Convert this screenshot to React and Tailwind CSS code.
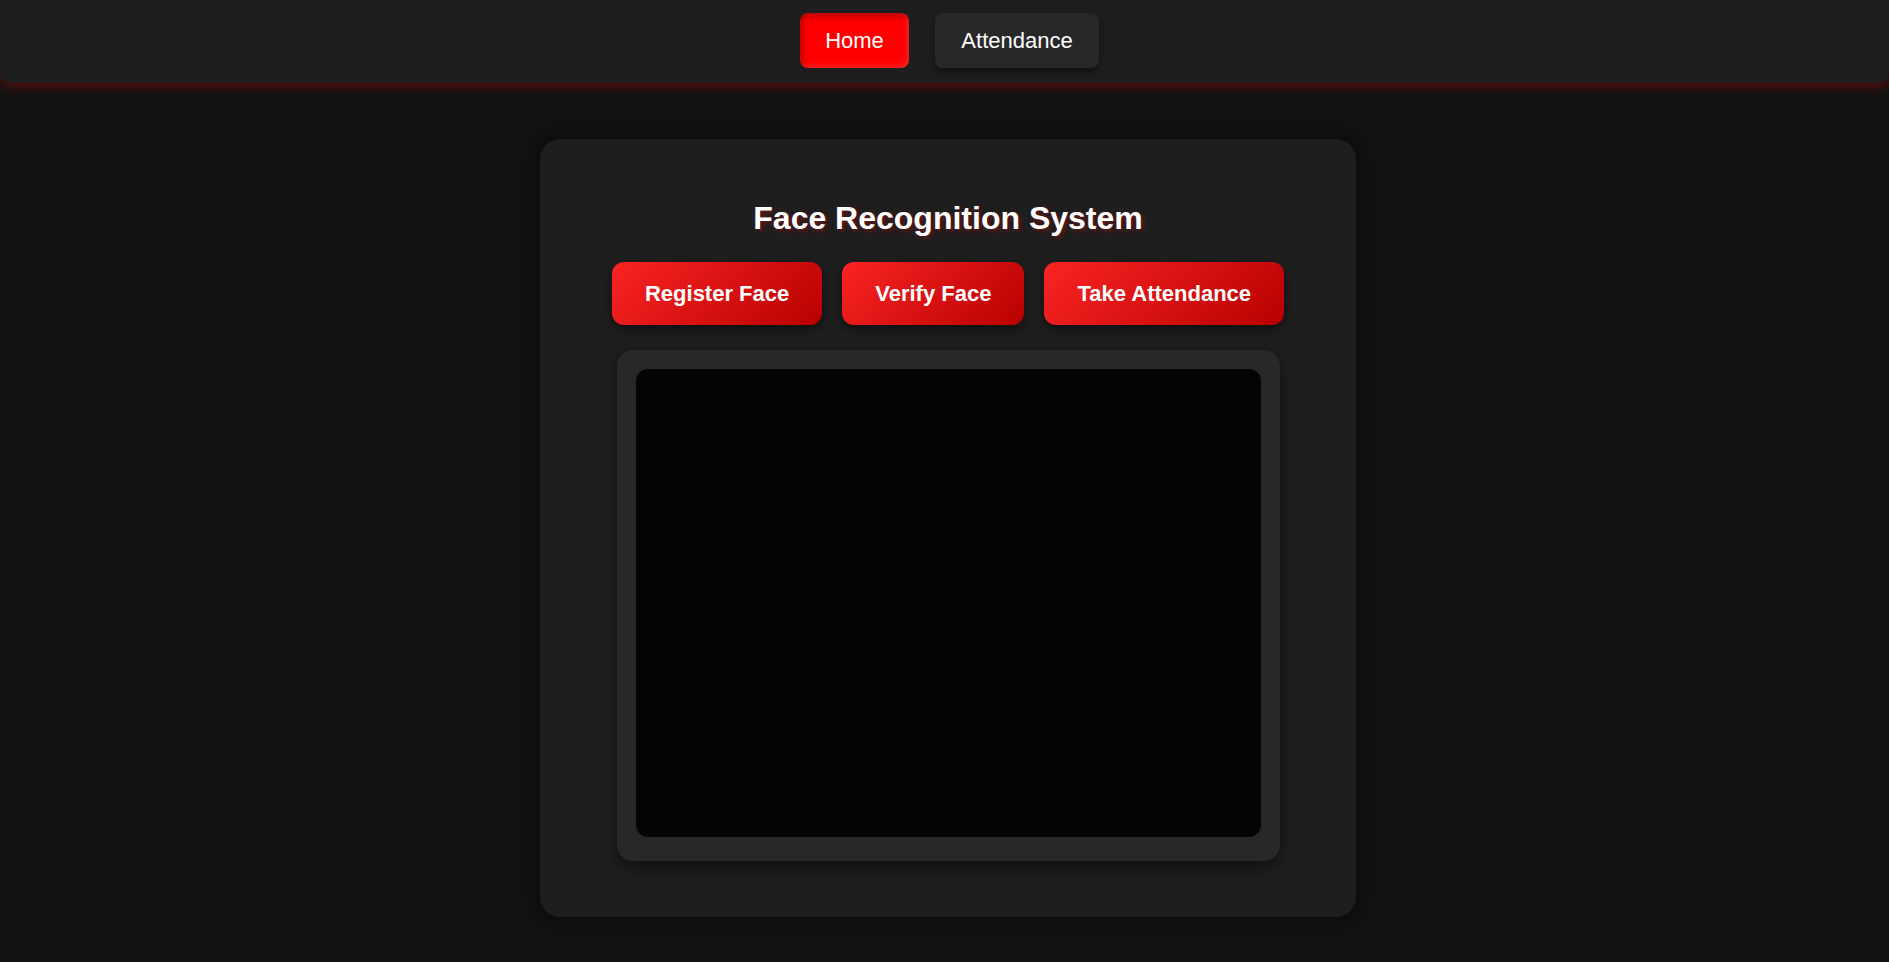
import { useState } from "react"

export default function App() {
  const [page, setPage] = useState("home")

  const navBtn = (active) =>
    active
      ? "bg-[#ff0000] text-white shadow-[inset_2px_3px_6px_rgba(0,0,0,0.3),inset_-2px_-2px_5px_rgba(255,120,120,0.35)]"
      : "bg-[#282828] text-white shadow-[0_4px_8px_rgba(0,0,0,0.45)]"

  return (
    <div className="min-h-[962px] bg-[#121212] font-['Liberation_Sans',Arial,sans-serif] text-white">
      {/* Navbar */}
      <nav className="h-[83px] bg-[#1e1e1e] rounded-b-[10px] shadow-[0_4px_12px_rgba(255,0,0,0.3)] flex justify-center items-start pt-[13px] pl-[10px] gap-[26px]">
        <button onClick={() => setPage("home")} className={`w-[109px] h-[55px] rounded-[8px] text-[22px] ${navBtn(page === "home")}`}>
          Home
        </button>
        <button onClick={() => setPage("attendance")} className={`w-[164px] h-[55px] rounded-[8px] text-[22px] ${navBtn(page === "attendance")}`}>
          Attendance
        </button>
      </nav>

      {/* Card */}
      <div className="flex justify-center pt-[56px] pl-[7px]">
        <div className="w-[816px] bg-[#1e1e1e] rounded-[20px] shadow-[0_0_24px_rgba(0,0,0,0.55)] pt-[61px] pb-[56px] flex flex-col items-center">
          <h2 className="h-[37px] text-[32px] font-bold leading-[37px] [text-shadow:2px_2px_5px_rgba(255,0,0,0.35)]">
            Face Recognition System
          </h2>

          <div className="mt-[25px] flex gap-[20px]">
            {["Register Face", "Verify Face", "Take Attendance"].map((label) => (
              <button key={label} className="h-[63px] px-[33px] rounded-[12px] text-[22px] font-bold text-white bg-[linear-gradient(135deg,#fa2424,#b80000)] shadow-[0_4px_10px_rgba(0,0,0,0.5)]">
                {label}
              </button>
            ))}
          </div>

          <div className="mt-[25px] w-[663px] h-[511px] bg-[#282828] rounded-[16px] shadow-[0_6px_16px_rgba(0,0,0,0.45)] pt-[19px] px-[19px] pb-[24px]">
            <div className="w-full h-full bg-[#050508] rounded-[12px]" />
          </div>
        </div>
      </div>
    </div>
  )
}
